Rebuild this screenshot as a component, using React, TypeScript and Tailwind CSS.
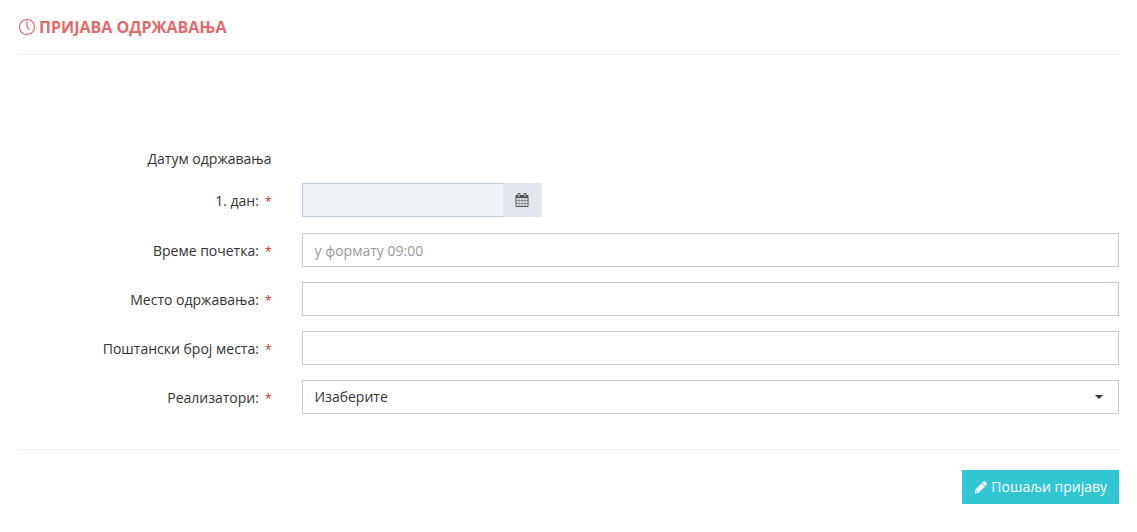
import React from 'react';
import { SlClock } from 'react-icons/sl';
import clsx from 'clsx';

const CalendarIcon: React.FC = () => (
  <svg viewBox="0 0 1792 1792" className="h-[14px] w-[14px]" fill="currentColor" aria-hidden="true">
    <path d="M192 1664h288v-288h-288v288zm352 0h320v-288h-320v288zm-352-352h288v-320h-288v320zm352 0h320v-320h-320v320zm-352-384h288v-288h-288v288zm736 736h320v-288h-320v288zm-384-736h320v-288h-320v288zm768 736h288v-288h-288v288zm-384-352h320v-320h-320v320zm-352-864v-288q0-13-9.5-22.5t-22.5-9.5h-64q-13 0-22.5 9.5t-9.5 22.5v288q0 13 9.5 22.5t22.5 9.5h64q13 0 22.5-9.5t9.5-22.5zm736 864h288v-320h-288v320zm-384-384h320v-288h-320v288zm384 0h288v-288h-288v288zm32-480v-288q0-13-9.5-22.5t-22.5-9.5h-64q-13 0-22.5 9.5t-9.5 22.5v288q0 13 9.5 22.5t22.5 9.5h64q13 0 22.5-9.5t9.5-22.5zm384-64v1280q0 52-38 90t-90 38h-1408q-52 0-90-38t-38-90v-1280q0-52 38-90t90-38h128v-96q0-66 47-113t113-47h64q66 0 113 47t47 113v96h384v-96q0-66 47-113t113-47h64q66 0 113 47t47 113v96h128q52 0 90 38t38 90z" />
  </svg>
);

const PencilIcon: React.FC = () => (
  <svg viewBox="0 0 13 13" className="h-[13px] w-[13px]" fill="currentColor" aria-hidden="true">
    <path d="M9 .9a1.7 1.7 0 0 1 2.4 0l.8.8a1.7 1.7 0 0 1 0 2.4L11.3 5 8.1 1.8z" />
    <path
      fillRule="evenodd"
      d="M7.7 2.2l3.2 3.2-6.3 6.3-3.9.9.8-4.1zM2.3 9.5l-.4 1.7 1.7-.4z"
    />
  </svg>
);

const inputStyles =
  'block h-[34px] w-full border border-[#c2cad8] bg-white px-3 text-[#555555] placeholder:text-[#999999] focus:border-[#93a1bb] focus:outline-none';

interface FieldProps {
  id: string;
  label: string;
  className?: string;
  children: React.ReactNode;
}

const Field: React.FC<FieldProps> = ({ id, label, className, children }) => (
  <div className={clsx('grid grid-cols-4', className)}>
    <label htmlFor={id} className="px-[15px] pt-2 text-right leading-5">
      {label}
      <span className="ml-1.5 text-xs text-[#e02222]">*</span>
    </label>
    <div className="col-span-3 px-[15px]">{children}</div>
  </div>
);

const App: React.FC = () => (
  <main className="bg-white pr-[3px] pl-1 text-sm text-[#333333] [font-family:'Open_Sans',sans-serif]">
    <header className="mx-[15px] flex h-[55px] items-center gap-1 border-b border-[#eeeeee] text-[#e26a6a]">
      <SlClock className="h-4 w-4 stroke-current stroke-[16px]" aria-hidden="true" />
      <h1 className="text-base font-bold uppercase">Пријава одржавања</h1>
    </header>

    <form className="pt-[94px]" onSubmit={(e) => e.preventDefault()}>
      <div className="grid grid-cols-4">
        <span className="px-[15px] text-right leading-5">Датум одржавања</span>
      </div>

      <Field id="date" label="1. дан:" className="mt-[14px]">
        <div className="flex w-60">
          <input
            id="date"
            type="text"
            readOnly
            className="h-[34px] min-w-0 flex-1 border border-r-0 border-[#c2cad8] bg-[#eef1f5] px-3 focus:outline-none"
          />
          <button
            type="button"
            aria-label="Изабери датум"
            className="flex h-[34px] w-[39px] items-center justify-center bg-[#e1e5ec] text-[#555555]"
          >
            <CalendarIcon />
          </button>
        </div>
      </Field>

      <Field id="time" label="Време почетка:" className="mt-4">
        <input id="time" type="text" placeholder="у формату 09:00" className={inputStyles} />
      </Field>

      <Field id="place" label="Место одржавања:" className="mt-[15px]">
        <input id="place" type="text" className={inputStyles} />
      </Field>

      <Field id="postal" label="Поштански број места:" className="mt-[15px]">
        <input id="postal" type="text" className={inputStyles} />
      </Field>

      <Field id="trainers" label="Реализатори:" className="mt-[15px]">
        <div className="relative">
          <select
            id="trainers"
            defaultValue=""
            className="block h-[34px] w-full appearance-none border border-[#cccccc] bg-white px-3 pr-8 focus:outline-none"
          >
            <option value="">Изаберите</option>
          </select>
          <svg
            viewBox="0 0 8 4"
            className="pointer-events-none absolute top-[15px] right-4 h-1 w-2"
            fill="currentColor"
            aria-hidden="true"
          >
            <path d="M0 0h8L4 4z" />
          </svg>
        </div>
      </Field>

      <div className="mx-[15px] mt-[35px] flex justify-end border-t border-[#eeeeee] pt-5">
        <button
          type="submit"
          className="flex h-[34px] items-center gap-1 bg-[#32c5d2] px-3 text-white hover:bg-[#26a1ab]"
        >
          <PencilIcon />
          Пошаљи пријаву
        </button>
      </div>
    </form>
  </main>
);

export default App;
